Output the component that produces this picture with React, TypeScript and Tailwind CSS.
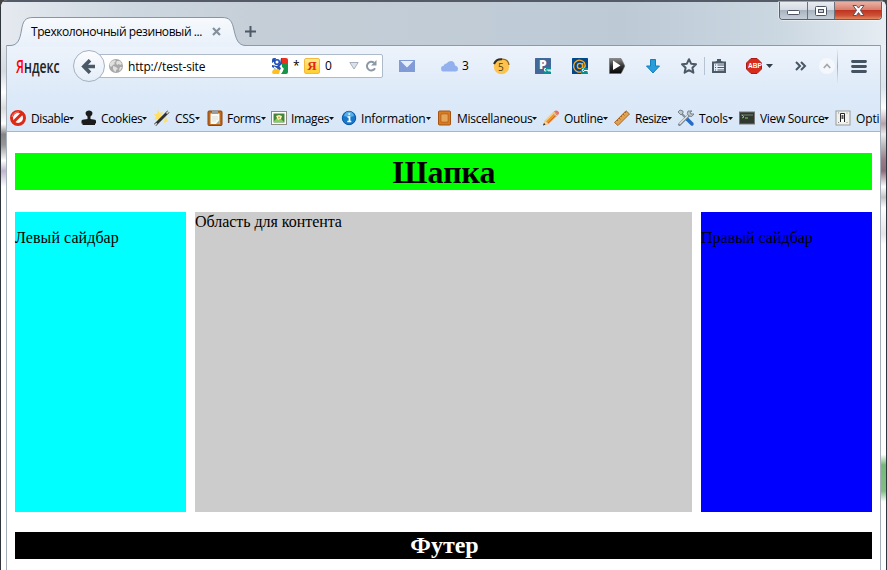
import type { ReactNode } from "react";

const ui = "font-['Open_Sans','Noto_Sans',sans-serif] text-[12px] leading-[16px] text-black whitespace-nowrap";

function Slot({ className, children }: { className: string; children?: ReactNode }) {
  return <div className={`flex shrink-0 items-center ${className}`}>{children}</div>;
}

function Icon({ children }: { children: ReactNode }) {
  return (
    <svg width="16" height="16" viewBox="0 0 16 16" className="block shrink-0 overflow-visible">
      {children}
    </svg>
  );
}

function ToolItem({ width, label, gap, tracking, icon, caret = true }: {
  width: string; label: string; gap: string; tracking: string; icon: ReactNode; caret?: boolean;
}) {
  return (
    <div className={`flex shrink-0 items-center ${width} ${gap}`}>
      <Icon>{icon}</Icon>
      <div className="flex items-center pt-px">
        <span className={`${ui} ${tracking}`}>{label}</span>
        {caret && (
          <svg width="5" height="3" viewBox="0 0 5 3" className="-mt-px block shrink-0">
            <path d="M0 0h5L2.5 3z" fill="#111" />
          </svg>
        )}
      </div>
    </div>
  );
}

function TitleBar() {
  return (
    <div className="flex h-[45px] shrink-0 items-end border-t-2 border-t-[#555b66] bg-[linear-gradient(90deg,#e6eaf0_0,#ced8e0_14%,#c5ced7_30%,#bdcad6_70%,#cbd7e1_88%,#e6edf3_100%)] pl-[6px]">
      <div className="relative flex h-[28px] w-[238px] shrink-0 items-center pl-[24px]">
        <svg width="240" height="30" viewBox="0 0 240 30" className="absolute left-0 top-0">
          <defs>
            <linearGradient id="tab" x1="0" y1="0" x2="0" y2="1">
              <stop offset="0" stopColor="#f7fafd" />
              <stop offset="1" stopColor="#e8f0fa" />
            </linearGradient>
          </defs>
          <path d="M0 30V28.5H3C11 28.5 13 22 14.5 13C16 4 18 .5 26 .5H215C223 .5 225 4 227 13C229 22 231 28.5 239 28.5V30z" fill="url(#tab)" />
          <path d="M0 28.5H3C11 28.5 13 22 14.5 13C16 4 18 .5 26 .5H215C223 .5 225 4 227 13C229 22 231 28.5 239 28.5" fill="none" stroke="#8795a5" />
        </svg>
        <span className={`${ui} relative w-[174px] pt-px tracking-[-0.42px]`}>Трехколоночный резиновый ...</span>
        <svg width="9" height="9" viewBox="0 0 9 9" className="relative ml-[7px] mt-px">
          <path d="M1 1l7 7M8 1l-7 7" stroke="#8591a0" strokeWidth="2.2" />
        </svg>
      </div>
      <svg width="11" height="11" viewBox="0 0 11 11" className="mb-[8px] shrink-0">
        <path d="M5.5 0v11M0 5.5h11" stroke="#4c5967" strokeWidth="2" />
      </svg>
      <div className="mr-[4px] ml-auto flex h-[18px] shrink-0 self-start overflow-hidden rounded-b-[4px] border border-t-0 border-[#5b616b] shadow-[0_0_0_1px_#ffffff70]">
        <div className="flex w-[28px] items-center justify-center border-r border-[#6a717b] bg-[linear-gradient(#e8ecf1_0,#d5dbe3_45%,#aab4c0_50%,#c5ced8_100%)]">
          <svg width="13" height="6" viewBox="0 0 13 6" className="mt-[4px]"><rect x=".5" y=".5" width="12" height="4" rx="1" fill="#fff" stroke="#4d5362" /></svg>
        </div>
        <div className="flex w-[27px] items-center justify-center border-r border-[#6a717b] bg-[linear-gradient(#e8ecf1_0,#d5dbe3_45%,#aab4c0_50%,#c5ced8_100%)]">
          <svg width="12" height="10" viewBox="0 0 12 10"><rect x=".5" y=".5" width="11" height="9" rx="1" fill="#fff" stroke="#4d5362" /><rect x="3.5" y="3.5" width="5" height="3" fill="#c8d0da" stroke="#4d5362" /></svg>
        </div>
        <div className="flex w-[46px] items-center justify-center bg-[linear-gradient(#eab0a3_0,#d87f6e_45%,#bd3520_50%,#cf5237_80%,#e08a62_100%)]">
          <svg width="13" height="11" viewBox="0 0 13 11"><path d="M1 .5h3.4l2.1 2.6L8.600 .5H12L8.400 5.300 12 10.500H8.600L6.500 7.600 4.400 10.500H1L4.600 5.300z" fill="#fff" stroke="#535666" /></svg>
        </div>
      </div>
    </div>
  );
}

function NavBar() {
  return (
    <div className="flex h-[40px] shrink-0 items-center pl-[9px]">
      <Slot className="w-[57px]">
        <span className="origin-left scale-x-[0.7] whitespace-nowrap font-['Open_Sans','Noto_Sans',sans-serif] text-[17.5px] leading-[20px] font-semibold text-[#222]">
          <span className="text-[#f00]">Я</span>ндекс
        </span>
      </Slot>
      <div className="z-10 flex size-[32px] shrink-0 items-center justify-center rounded-full border border-[#a5b2c2] bg-[linear-gradient(#fbfcfe,#e4edf8)]">
        <svg width="16" height="15" viewBox="0 0 16 15">
          <path d="M9 1.200L2.800 7.500 9 13.800M3 7.500H14" fill="none" stroke="#4b5866" strokeWidth="3.600" strokeLinejoin="miter" />
        </svg>
      </div>
      <div className="-ml-[6px] flex h-[24px] w-[284px] shrink-0 items-center rounded-r-[2px] border border-[#acbac9] bg-white pl-[9px]">
        <Slot className="w-[19px]">
          <svg width="14" height="14" viewBox="0 0 14 14">
            <circle cx="7" cy="7" r="7" fill="#a8a8a8" />
            <path d="M1 4Q3 1 6 1l1 1-2 2 1 1-2 1-2 2-1-1zM8 2l3 0 2 3-2 1-1-1-2 1-1-2zM4 7l3 1 2 2-2 1 0 2-2-1-1-2zM11 8l2 0-2 4-1-1z" fill="#e0e0e0" />
          </svg>
        </Slot>
        <Slot className="w-[144px] pt-px"><span className={`${ui} tracking-[-0.16px]`}>http://test-site</span></Slot>
        <Slot className="w-[22px]">
          <Icon>
            <rect width="16" height="16" rx="2" fill="#fff" />
            <path d="M0 2Q0 0 2 0H4L3 3 0 5zM9 0h1v6L8 8 9 10 8 12H5L0 9V7L5 8 8 5z" fill="#2452b3" />
            <path d="M10 0h4q2 0 2 2v4h-6z" fill="#ea3020" />
            <path d="M10 6h6v8q0 2-2 2H9l2-4-1-3z" fill="#169447" />
            <path d="M1 12Q4 9 8 12L7 16H2Q0 16 0 14z" fill="#ffbf1c" />
            <circle cx="5" cy="4" r="2.300" fill="#fff" stroke="#2452b3" strokeWidth="1.600" />
            <path d="M8 8l3 3-2 4M2 9l3 2" stroke="#fff" strokeWidth="1.500" fill="none" />
          </Icon>
        </Slot>
        <Slot className="w-[10px]"><span className={`${ui} -ml-px`}>*</span></Slot>
        <Slot className="w-[21px]">
          <span className="flex size-[16px] items-center justify-center rounded-[2px] border border-[#f6b93c] bg-[linear-gradient(#ffe992,#ffd02f)] font-['Liberation_Serif',serif] text-[13px] leading-[14px] font-bold text-[#e02716]">Я</span>
        </Slot>
        <Slot className="w-[24px]"><span className={ui}>0</span></Slot>
        <Slot className="w-[16px]">
          <svg width="10" height="8" viewBox="0 0 10 8"><path d="M.8 .5h8.400L5 7z" fill="#dce2e9" stroke="#a5afbc" /></svg>
        </Slot>
        <svg width="12" height="12" viewBox="0 0 12 12"><path d="M9 2.800A4.300 4.300 0 1 0 10 8.200" fill="none" stroke="#8d98a6" strokeWidth="2" /><path d="M11.500 0v5.500H6z" fill="#8d98a6" /></svg>
      </div>
      <Slot className="ml-[16px] w-[42px]">
        <svg width="16" height="12" viewBox="0 0 16 12"><path d="M0 0h16v12H0z" fill="#819bd7" /><path d="M1.500 1h13L8 7.500z" fill="#e8effb" /></svg>
      </Slot>
      <Slot className="w-[21px]">
        <svg width="17" height="11" viewBox="0 0 17 11"><path d="M2 10.500Q0 10 0 7.500 0 5 3 4.500 3 2.500 5.500 2.500 7 0 10 0 13.500 0 14 4.500 17 5 17 8 17 10 15 10.500z" fill="#92afee" /></svg>
      </Slot>
      <Slot className="w-[31px]"><span className={ui}>3</span></Slot>
      <Slot className="relative w-[42px]">
        <svg width="17" height="17" viewBox="0 0 17 17"><circle cx="8.500" cy="8.700" r="7.600" fill="#fdc34c" /><path d="M1 6A7.800 7.800 0 0 1 9 1.200" fill="none" stroke="#302d26" strokeWidth="2" /><path d="M9 1.200Q15 1 16 7" fill="none" stroke="#8f671c" strokeWidth="1.300" /></svg>
        <span className="absolute left-[5px] top-[2px] font-['Open_Sans',sans-serif] text-[10px] leading-[14px] text-[#4a3b20]">5</span>
      </Slot>
      <Slot className="relative w-[37px]">
        <Icon>
          <rect width="16" height="16" rx=".5" fill="#42689a" />
          <path d="M9 9h7v7H9z" fill="#079094" />
          <path d="M11 10.500a1.300 1.300 0 1 0 .1 2.500M11.500 12H16v2M14 12v1.500" fill="none" stroke="#fff" strokeWidth="1.100" />
        </Icon>
        <span className="absolute left-[4px] top-0 font-['Open_Sans',sans-serif] text-[12px] leading-[14px] font-extrabold text-white">P</span>
      </Slot>
      <Slot className="w-[37px]">
        <Icon>
          <rect width="16" height="16" rx=".5" fill="#00478d" />
          <circle cx="8" cy="8" r="2.600" fill="none" stroke="#ffa91b" strokeWidth="1.300" />
          <path d="M10.700 5v4.200Q11 11 12.500 10 14 7.500 12.500 4.700A6 6 0 1 0 10 13.700" fill="none" stroke="#ffa91b" strokeWidth="1.300" />
          <path d="M9 10h7v6H9z" fill="#079094" />
          <path d="M12 11a1.300 1.300 0 1 0 .1 2.500M12 12.500h4v2" fill="none" stroke="#fff" />
        </Icon>
      </Slot>
      <Slot className="w-[37px]">
        <Icon>
          <defs><linearGradient id="play" x1="0" y1="0" x2="0" y2="1"><stop stopColor="#8b8b8b" /><stop offset=".5" stopColor="#333" /><stop offset="1" stopColor="#050505" /></linearGradient></defs>
          <path d="M.5 .5H12Q12.500 1 15.800 8 12.500 15 12 15.500H.5z" fill="url(#play)" stroke="#666" strokeWidth=".6" />
          <path d="M4 2.500v9.500L11.500 7.500z" fill="#fff" />
        </Icon>
      </Slot>
      <Slot className="w-[35px]">
        <svg width="14" height="15" viewBox="0 0 14 15"><path d="M4.500 .5h5v6.500h4L7 14 .5 7h4z" fill="#279ddb" stroke="#137fb9" /></svg>
      </Slot>
      <Slot className="w-[23px]">
        <Icon><path d="M8 1.200l2.100 4.500 4.900.6-3.600 3.400 1 5L8 12.200 3.600 14.700l1-5L1 6.300l4.900-.6z" fill="none" stroke="#4c5967" strokeWidth="2" strokeLinejoin="round" /></Icon>
      </Slot>
      <div className="mr-[7px] h-[18px] w-px shrink-0 bg-[#b6c3d2]" />
      <Slot className="w-[34px]">
        <svg width="14" height="16" viewBox="0 0 14 16" className="shrink-0"><path d="M1 4.500h12V14H1z" fill="none" stroke="#4c5967" strokeWidth="2" /><path d="M2.500 4L5 3V1h4v2l2.500 1z" fill="#4c5967" /><path d="M3 7h1M5.500 7H12M3 9.500h1M5.500 9.500H12M3 12h1M5.500 12H12" stroke="#4c5967" strokeWidth="1.200" /></svg>
      </Slot>
      <Slot className="relative w-[20px]">
        <Icon><path d="M5 .5h6L15.500 5v6L11 15.500H5L.5 11V5z" fill="#d72b1b" stroke="#a91c13" /></Icon>
        <span className="absolute left-[1.5px] top-[3px] origin-left scale-x-[0.82] font-['Liberation_Sans',sans-serif] text-[8px] leading-[10px] font-bold text-white">ABP</span>
      </Slot>
      <Slot className="w-[29px]"><svg width="7" height="4" viewBox="0 0 7 4"><path d="M0 0h7L3.500 4z" fill="#303c49" /></svg></Slot>
      <Slot className="w-[24px]"><svg width="12" height="10" viewBox="0 0 12 10"><path d="M1 1l4 4-4 4M6 1l4 4-4 4" fill="none" stroke="#485563" strokeWidth="2" /></svg></Slot>
      <Slot className="w-[18px]">
        <span className="flex size-[16px] items-center justify-center rounded-full bg-[#f4f7fc]"><svg width="8" height="6" viewBox="0 0 8 6"><path d="M.8 5L4 1.500 7.200 5" fill="none" stroke="#a3a6ab" strokeWidth="1.700" /></svg></span>
      </Slot>
      <div className="mr-[13px] h-[36px] w-px shrink-0 bg-[linear-gradient(transparent,#9daec0,transparent)]" />
      <svg width="16" height="13" viewBox="0 0 16 13" className="shrink-0"><path d="M1.500 1.500h13M1.500 6.500h13M1.500 11.500h13" stroke="#465361" strokeWidth="2.800" strokeLinecap="round" /></svg>
    </div>
  );
}

function DeveloperBar() {
  return (
    <div className="mt-auto flex h-[26px] shrink-0 items-center overflow-hidden pl-[3px]">
      <ToolItem width="w-[71px]" gap="gap-[5px]" label="Disable" tracking="tracking-[-0.4px]" icon={<><circle cx="8" cy="8" r="6.500" fill="#fff" stroke="#dc2a17" strokeWidth="3" /><path d="M3.500 12L12 3.500" stroke="#dc2a17" strokeWidth="3" /><path d="M2 7Q3 2 9 2" fill="none" stroke="#f78170" /></>} />
      <ToolItem width="w-[73px]" gap="gap-[4px]" label="Cookies" tracking="tracking-[-0.33px]" icon={<path d="M4.500 3Q5 .5 8 .5T11.500 3Q11.500 5 9.500 6.500V9l4.500 .8q1 .2 1 1.200v2.500H14V15H1.500v-1.500H.5V11q0-1 1-1.200L6.500 9V6.500Q4.500 5 4.500 3z" fill="#1c1c1c" />} />
      <ToolItem width="w-[53px]" gap="gap-[5px]" label="CSS" tracking="tracking-[-0.3px]" icon={<><path d="M4 0l1.500 3L9 2 7 5.500 10 8 6.500 8 6 12 3.500 9 0 10 2 6.500 0 4l3 0zM11 6l3 5-4 2z" fill="#ffdf65" /><path d="M1 15L14.500 1.500" stroke="#303030" strokeWidth="2.800" /><path d="M12.500 3.500l2.500-2.500M.8 15.200l2-2" stroke="#ddd" strokeWidth="1.600" /></>} />
      <ToolItem width="w-[64px]" gap="gap-[4px]" label="Forms" tracking="tracking-[-0.3px]" icon={<><rect x="1" y="1" width="14" height="14.500" rx="1" fill="#bc681c" stroke="#8c4611" /><path d="M3.500 3.500h9V14h-9z" fill="#fafaf4" /><path d="M5 0h6v4H5z" fill="#9b9d9c" /><path d="M5 7h6M5 9h6M5 11h4" stroke="#ddd" /><path d="M9 14l3.500-4v4z" fill="#aaa" /></>} />
      <ToolItem width="w-[71px]" gap="gap-[4px]" label="Images" tracking="tracking-[-0.35px]" icon={<><rect x=".5" y="1.500" width="15" height="13" fill="#fff" stroke="#8b8b82" /><path d="M2.500 3.500h11v9h-11z" fill="#42863d" /><path d="M3 11l3-3 2 2 2-1 3 3H3z" fill="#8dcb5e" /><path d="M5 6l3-1 3 1-1 3-3 1z" fill="#fff6b7" /><circle cx="8" cy="7.500" r="1" fill="#e4a51a" /></>} />
      <ToolItem width="w-[95px]" gap="gap-[3px]" label="Information" tracking="tracking-[-0.18px]" icon={<><circle cx="7" cy="8" r="6.700" fill="#1877c8" stroke="#0755a3" /><path d="M2 6Q3 1.500 7 1.500T12 6Q7 8 2 6" fill="#58aee8" /><path d="M5.500 7H7.500v4.500M5.300 11.500h4M6.400 4h1.800" fill="none" stroke="#fff" strokeWidth="1.700" /></>} />
      <ToolItem width="w-[106px]" gap="gap-[4px]" label="Miscellaneous" tracking="tracking-[-0.29px]" icon={<><rect x="1.500" y="1" width="12" height="14" rx="1" fill="#d57c24" stroke="#a85211" /><path d="M4 4h7v8H4z" fill="#f4bd70" stroke="#b96319" /><path d="M4 6h7M4 8h7M4 10h7" stroke="#d58d42" /></>} />
      <ToolItem width="w-[71px]" gap="gap-[5px]" label="Outline" tracking="tracking-[-0.33px]" icon={<><path d="M0 15.500L2 10.500 11 1.500 15 5 5.500 14z" fill="#ee922a" /><path d="M2.500 11L11.500 2" stroke="#ffd377" strokeWidth="1.500" /><path d="M4.500 13.500L14 4" stroke="#d66916" /><path d="M11 1.500Q13-.5 15 1.200T15 5z" fill="#e66f69" /><path d="M10 2.500l4 3.500" stroke="#ccc" strokeWidth="1.500" /><path d="M0 15.500l2-5 3.500 3.500z" fill="#f5d5a5" /><path d="M0 15.500l1-2.500 1.500 1.500z" fill="#222" /></>} />
      <ToolItem width="w-[64px]" gap="gap-[5px]" label="Resize" tracking="tracking-[-0.48px]" icon={<><path d="M.5 12.500L12 .8 15.500 4 4 15.500z" fill="#dda252" stroke="#ae6728" /><path d="M3 10l1 1M5 8l1.500 1.500M7 6l1 1M9 4l1.500 1.500M11 2l1 1" stroke="#8f5624" strokeWidth=".8" /></>} />
      <ToolItem width="w-[61px]" gap="gap-[5px]" label="Tools" tracking="tracking-[-0.2px]" icon={<><path d="M3 3l10 10" stroke="#83909b" strokeWidth="2.200" /><path d="M9 9l5 5" stroke="#276bc9" strokeWidth="3.500" strokeLinecap="round" /><path d="M1.500 14.500L12 4" stroke="#7a858f" strokeWidth="3" strokeLinecap="round" /><path d="M1.500 14L12 3.500" stroke="#e5eaed" strokeWidth="1.200" /><path d="M10 1Q8 4 11 6t5-2l-3 0-1-2 2-1zM0 2l2-2 3 1v2L3 5z" fill="#bcc5cc" stroke="#68747e" strokeWidth=".8" /></>} />
      <ToolItem width="w-[96px]" gap="gap-[5px]" label="View Source" tracking="tracking-[-0.32px]" icon={<><rect x=".5" y="2" width="15" height="12" fill="#303830" stroke="#777" /><path d="M2 4h12v2H2z" fill="#53604f" /><path d="M3 5l2 2-2 1M6 8h3" fill="none" stroke="#6edb4a" /></>} />
      <ToolItem width="w-[44px]" gap="gap-[5px]" label="Opti" tracking="tracking-[-0.15px]" caret={false} icon={<><rect x="1" y="1" width="14" height="14" fill="#f0f0ec" stroke="#999" /><path d="M5.500 12V3.500h4V12" fill="#fff" stroke="#222" /><path d="M6.500 5h2v4h-2z" fill="#555" /><path d="M3 3h1M11.500 3h1M3 12.500h1M11.500 12.500h1" stroke="#888" /></>} />
    </div>
  );
}

function Page() {
  return (
    <main className="min-h-0 flex-1 bg-white px-2 pt-[21px] font-['Liberation_Serif','Times_New_Roman',serif] text-[16px] leading-[18px] text-black">
      <h1 className="h-[37px] bg-[#00ff00] pl-px text-center text-[32px] leading-[39px] font-bold">Шапка</h1>
      <div className="mt-[22px] flex h-[300px] gap-[9px]">
        <aside className="w-[171px] shrink-0 bg-[#00ffff] pt-[17px] tracking-[0.06px]">Левый сайдбар</aside>
        <section className="min-w-0 flex-1 bg-[#cccccc] pt-px tracking-[-0.04px]">Область для контента</section>
        <aside className="w-[171px] shrink-0 bg-[#0000ff] pt-[17px]">Правый сайдбар</aside>
      </div>
      <footer className="mt-5 h-[27px] bg-black pl-[2px] text-center text-[24px] leading-[27px] font-bold text-white">Футер</footer>
    </main>
  );
}

export default function App() {
  return (
    <div className="h-[570px] w-[887px] overflow-hidden bg-[#444]">
      <div className="flex h-full flex-col overflow-hidden rounded-t-[7px] border-x border-[#30343b] bg-white">
        <TitleBar />
        <div className="flex min-h-0 flex-1">
          <div className="w-[5px] shrink-0 bg-[linear-gradient(#e4e8ed_0,#d5dbe1_5%,#fff_9%,#d8dade_12%,#fff_15%,#858585_17%,#969696_19%,#fff_22%,#c1b2ce_24%,#fff_27%,#fff_100%)]" />
          <div className="flex w-[875px] shrink-0 flex-col overflow-hidden border-x border-[#a4afba]">
            <div className="flex h-[87px] shrink-0 flex-col overflow-hidden border-y border-t-[#8c9aaa] border-b-[#a4b6ca] bg-[linear-gradient(#edf3fb_0,#dce9f8_60%,#d8e7f7_100%)]">
              <NavBar />
              <DeveloperBar />
            </div>
            <Page />
          </div>
          <div className="flex-1 bg-[linear-gradient(#e9eff4_0,#dbe4ec_8%,#fff_12%,#b7a1ac_15%,#ececec_17%,#bebebe_19%,#987a88_22%,#8d6d7b_24%,#fff_27%,#c3c3c3_29%,#fff_31%,#e5e5e5_36%,#fff_38%,#fff_78%,#75b978_80%,#82bf86_85%,#fff_87%)]" />
        </div>
      </div>
    </div>
  );
}
